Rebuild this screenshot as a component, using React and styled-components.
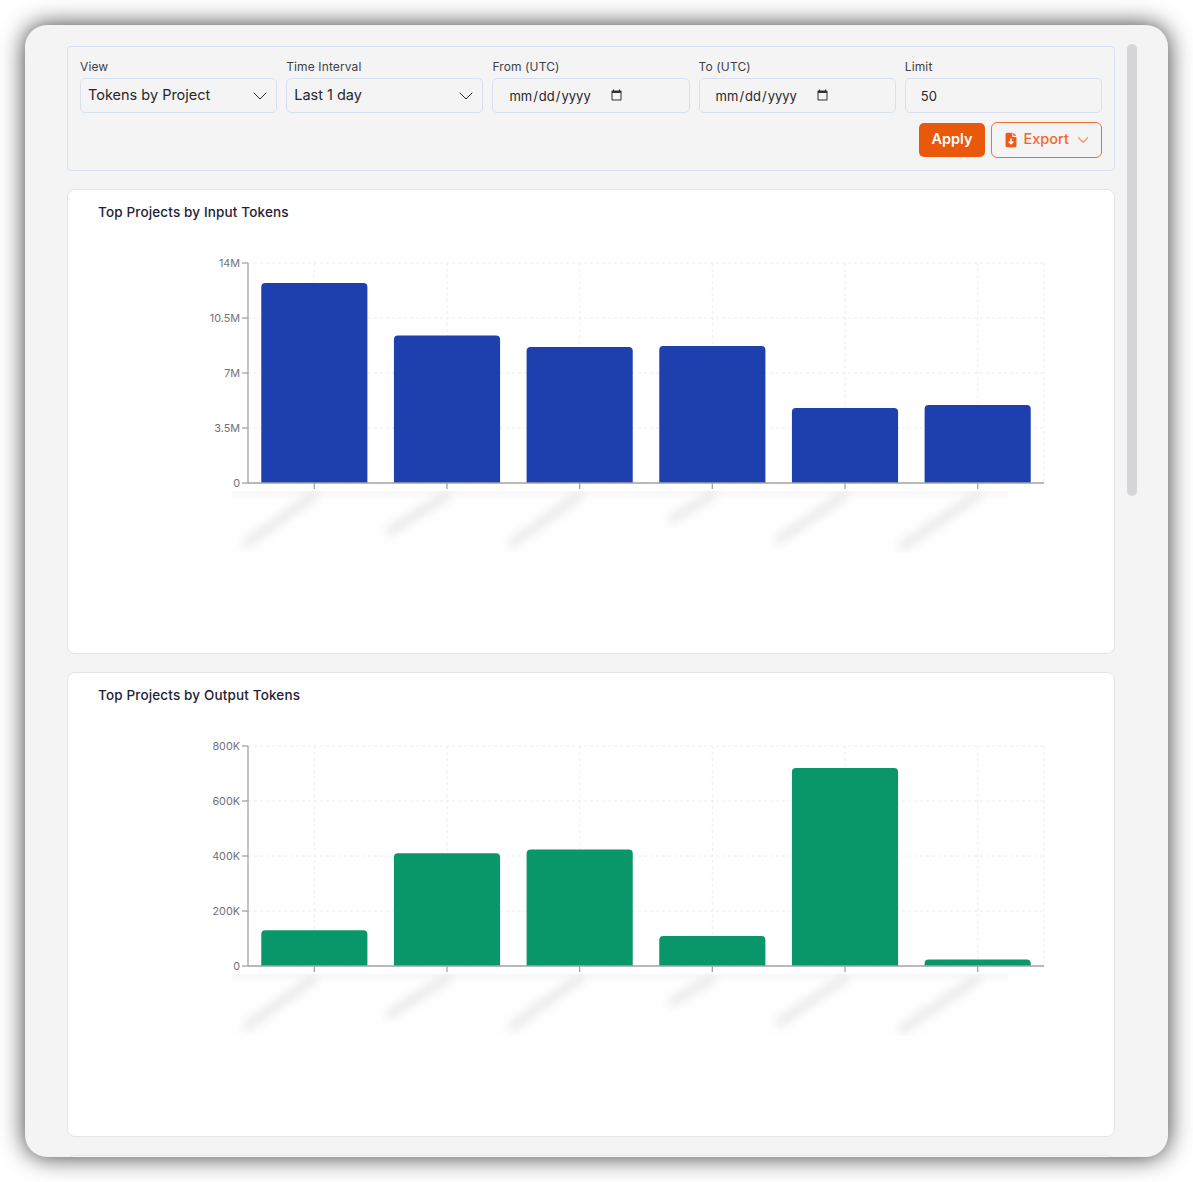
import React from 'react'
import styled, { createGlobalStyle } from 'styled-components'
import { ChevronDown } from 'lucide-react'

const GlobalStyle = createGlobalStyle`
    html, body {
        margin: 0;
        background: #fff;
    }
    * {
        box-sizing: border-box;
    }
`

const Page = styled.div`
    padding: 25px;
    height: 1182px;
    overflow: hidden;
    font-family: Inter, "Noto Sans", sans-serif;
`

const Window = styled.div`
    width: 1143px;
    height: 1132px;
    display: flex;
    align-items: flex-start;
    gap: 12px;
    padding: 21px 0 0 42px;
    background: #f4f4f5;
    border-radius: 22px;
    overflow: hidden;
    box-shadow: 0 0 25px rgba(0, 0, 0, 0.78);
`

const Content = styled.div`
    width: 1048px;
    flex: none;
    display: flex;
    flex-direction: column;
    gap: 18px;
`

const ScrollThumb = styled.div`
    width: 10px;
    height: 452px;
    margin-top: -2px;
    border-radius: 5px;
    background: #d6d6d8;
`

const FilterPanel = styled.div`
    height: 125px;
    padding: 12px 12px 0;
    border: 1px solid #d7dff0;
    border-radius: 4px;
    display: flex;
    flex-direction: column;
    gap: 9px;
`

const FieldRow = styled.div`
    display: grid;
    grid-template-columns: repeat(5, minmax(0, 1fr));
    gap: 9px;
`

const Field = styled.label`
    min-width: 0;
    display: flex;
    flex-direction: column;
    gap: 3px;
`

const FieldLabel = styled.span`
    font-size: 12px;
    line-height: 16px;
    letter-spacing: 0.12px;
    color: #3f3f46;
`

const Select = styled.div`
    height: 35px;
    padding: 0 4px 2px 7px;
    display: flex;
    align-items: center;
    justify-content: space-between;
    border: 1px solid #d7dff0;
    border-radius: 5px;
    font-size: 14.5px;
    color: #27272a;

    svg {
        margin-top: 2px;
    }
`

const Input = styled.input`
    height: 35px;
    width: 100%;
    min-width: 0;
    padding: 0 15px;
    border: 1px solid #d7dff0;
    border-radius: 5px;
    background: transparent;
    font-family: inherit;
    font-size: 13px;
    color: #27272a;
    outline: none;
`

const DateInput = styled(Input)`
    padding-right: 64px;

    &::-webkit-calendar-picker-indicator {
        opacity: 0.8;
    }
`

const Actions = styled.div`
    display: flex;
    justify-content: flex-end;
    align-items: center;
    gap: 6px;
`

const ApplyButton = styled.button`
    width: 66px;
    height: 34px;
    padding: 0 0 3px;
    border: none;
    border-radius: 5px;
    background: #ea580c;
    color: #fff;
    font-family: inherit;
    font-size: 14.5px;
    font-weight: 600;
`

const ExportButton = styled.button`
    width: 111px;
    height: 36px;
    padding: 0 9px 0 12px;
    display: flex;
    align-items: center;
    gap: 5px;
    border: 1px solid #f0703a;
    border-radius: 6px;
    background: transparent;
    color: #f4662a;
    font-family: inherit;
    font-size: 14.5px;
    font-weight: 500;
`

const ExportLabel = styled.span`
    margin-bottom: 3px;
`

const ExportChevron = styled(ChevronDown)`
    margin-left: auto;
    opacity: 0.7;
`

const Card = styled.section`
    height: 465px;
    flex: none;
    padding-top: 12px;
    background: #fff;
    border: 1px solid #e5e5e8;
    border-radius: 8px;
`

const CardTitle = styled.h2`
    margin: 0 0 21px 30px;
    font-size: 13.5px;
    line-height: 20px;
    font-weight: 500;
    letter-spacing: 0.15px;
    color: #1f2333;
`

const ChartSvg = styled.svg`
    display: block;
`

const PLOT = { left: 180, right: 976, top: 20, bottom: 240 }
const BAND = (PLOT.right - PLOT.left) / 6

// end of each blurred project name, relative to its tick
const LABEL_ENDS = [[-67, 48], [-57, 36], [-67, 48], [-40, 24], [-65, 44], [-75, 51]]

function Chart({ id, color, max, ticks, values }) {
    const toY = (v) => PLOT.bottom - (v / max) * (PLOT.bottom - PLOT.top)
    const centers = values.map((_, i) => PLOT.left + BAND * (i + 0.5))

    return (
        <ChartSvg width="1046" height="400" viewBox="0 0 1046 400">
            <defs>
                <filter id={`${id}-blur`} x="-40%" y="-40%" width="180%" height="180%">
                    <feGaussianBlur stdDeviation="5" />
                </filter>
                <clipPath id={`${id}-clip`}>
                    <rect x="164" y="248" width="776" height="62" />
                </clipPath>
                <linearGradient id={`${id}-fade`} x1="0" y1="0" x2="0" y2="1">
                    <stop offset="0" stopColor="#f7f7fb" />
                    <stop offset="0.14" stopColor="#fefefe" />
                    <stop offset="1" stopColor="#fefefe" />
                </linearGradient>
            </defs>

            <g stroke="#e9ecf3" strokeDasharray="3 3">
                {ticks.map((t) => (
                    <line key={t.label} x1={PLOT.left} x2={PLOT.right} y1={toY(t.value)} y2={toY(t.value)} />
                ))}
                {[...centers, PLOT.right].map((x) => (
                    <line key={x} x1={x} x2={x} y1={PLOT.top} y2={PLOT.bottom} />
                ))}
            </g>

            {values.map((v, i) => {
                const w = BAND * 0.8
                const x = centers[i] - w / 2
                const y = toY(v)
                return (
                    <path
                        key={i}
                        fill={color}
                        d={`M${x} ${PLOT.bottom}V${y + 4}Q${x} ${y} ${x + 4} ${y}H${x + w - 4}Q${x + w} ${y} ${x + w} ${y + 4}V${PLOT.bottom}Z`}
                    />
                )
            })}

            <g stroke="#a3a3a3" strokeWidth="1.3">
                <line x1={PLOT.left} x2={PLOT.left} y1={PLOT.top} y2={PLOT.bottom} />
                <line x1={PLOT.left} x2={PLOT.right} y1={PLOT.bottom} y2={PLOT.bottom} />
                {ticks.map((t) => (
                    <line key={t.label} x1={PLOT.left - 6} x2={PLOT.left} y1={toY(t.value)} y2={toY(t.value)} />
                ))}
                {centers.map((x) => (
                    <line key={x} x1={x} x2={x} y1={PLOT.bottom} y2={PLOT.bottom + 6} />
                ))}
            </g>

            <g fontSize="10.8" fill="#71717a" textAnchor="end">
                {ticks.map((t) => (
                    <text key={t.label} x={PLOT.left - 8} y={toY(t.value) + 4}>{t.label}</text>
                ))}
            </g>

            <g clipPath={`url(#${id}-clip)`}>
                <rect x="164" y="248" width="776" height="62" fill={`url(#${id}-fade)`} />
                <g filter={`url(#${id}-blur)`} stroke="#e7e7e9" strokeWidth="8" strokeLinecap="round">
                    {centers.map((x, i) => (
                        <line key={x} x1={x} y1="252" x2={x + LABEL_ENDS[i][0]} y2={252 + LABEL_ENDS[i][1]} />
                    ))}
                </g>
            </g>
        </ChartSvg>
    )
}

function FileDownIcon() {
    return (
        <svg width="16" height="18" viewBox="0 0 14 16">
            <path fill="#f4581a" d="M3 1h5v4h4v8.5a1.5 1.5 0 0 1-1.5 1.5h-7.500A1.500 1.500 0 0 1 1.500 13.500v-11A1.500 1.500 0 0 1 3 1zM9 1l3 3H9z" />
            <path fill="none" stroke="#fff" strokeWidth="1.500" d="M6.800 6.500v5M4.600 9.400l2.200 2.200 2.200-2.200" />
        </svg>
    )
}

const inputTicks = [
    { value: 0, label: '0' },
    { value: 3.5, label: '3.5M' },
    { value: 7, label: '7M' },
    { value: 10.5, label: '10.5M' },
    { value: 14, label: '14M' },
]

const outputTicks = [
    { value: 0, label: '0' },
    { value: 200, label: '200K' },
    { value: 400, label: '400K' },
    { value: 600, label: '600K' },
    { value: 800, label: '800K' },
]

export default function App() {
    return (
        <Page>
            <GlobalStyle />
            <Window>
                <Content>
                    <FilterPanel>
                        <FieldRow>
                            <Field>
                                <FieldLabel>View</FieldLabel>
                                <Select>Tokens by Project<ChevronDown size={24} strokeWidth={1} /></Select>
                            </Field>
                            <Field>
                                <FieldLabel>Time Interval</FieldLabel>
                                <Select>Last 1 day<ChevronDown size={24} strokeWidth={1} /></Select>
                            </Field>
                            <Field>
                                <FieldLabel>From (UTC)</FieldLabel>
                                <DateInput type="date" />
                            </Field>
                            <Field>
                                <FieldLabel>To (UTC)</FieldLabel>
                                <DateInput type="date" />
                            </Field>
                            <Field>
                                <FieldLabel>Limit</FieldLabel>
                                <Input type="text" defaultValue="50" />
                            </Field>
                        </FieldRow>
                        <Actions>
                            <ApplyButton>Apply</ApplyButton>
                            <ExportButton>
                                <FileDownIcon />
                                <ExportLabel>Export</ExportLabel>
                                <ExportChevron size={20} strokeWidth={1.6} />
                            </ExportButton>
                        </Actions>
                    </FilterPanel>

                    <Card>
                        <CardTitle>Top Projects by Input Tokens</CardTitle>
                        <Chart
                            id="input"
                            color="#1e40af"
                            max={14}
                            ticks={inputTicks}
                            values={[12.72, 9.38, 8.65, 8.72, 4.78, 4.97]}
                        />
                    </Card>

                    <Card>
                        <CardTitle>Top Projects by Output Tokens</CardTitle>
                        <Chart
                            id="output"
                            color="#0a966b"
                            max={800}
                            ticks={outputTicks}
                            values={[130, 410, 424, 109, 720, 24]}
                        />
                    </Card>

                    <Card />
                </Content>
                <ScrollThumb />
            </Window>
        </Page>
    )
}
